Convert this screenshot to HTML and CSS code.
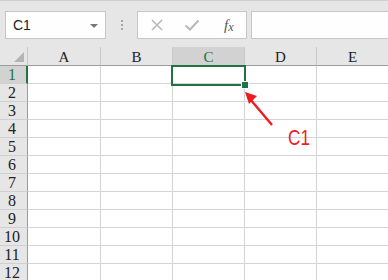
FILE: index.html
```html
<!DOCTYPE html>
<html>
<head>
<meta charset="utf-8">
<link rel="stylesheet" href="styles.css">
</head>
<body>
<div class="app">
  <div class="toolbar">
    <div class="namebox">
      <span class="name">C1</span>
      <span class="caret"></span>
    </div>
    <div class="grip"><i></i><i></i><i></i></div>
    <div class="fbtns">
      <svg class="ico" width="14" height="14" viewBox="0 0 14 14"><path d="M2 2 L12 12 M12 2 L2 12" stroke="#b9b9b9" stroke-width="1.6" fill="none"/></svg>
      <svg class="ico" width="16" height="14" viewBox="0 0 16 14"><path d="M1.5 7.5 L6 11.5 L14.5 2.5" stroke="#b9b9b9" stroke-width="2" fill="none"/></svg>
      <span class="fx"><i>f</i><sub>x</sub></span>
    </div>
    <div class="finput"></div>
  </div>
  <div class="sheet">
    <div class="row head">
      <div class="rh corner"><span class="tri"></span></div>
      <div class="ch first">A</div>
      <div class="ch">B</div>
      <div class="ch sel">C</div>
      <div class="ch">D</div>
      <div class="ch">E</div>
    </div>
    <div class="row"><div class="rh sel">1</div><div class="c first"></div><div class="c"></div><div class="c"></div><div class="c"></div><div class="c"></div></div>
    <div class="row"><div class="rh">2</div><div class="c first"></div><div class="c"></div><div class="c"></div><div class="c"></div><div class="c"></div></div>
    <div class="row"><div class="rh">3</div><div class="c first"></div><div class="c"></div><div class="c"></div><div class="c"></div><div class="c"></div></div>
    <div class="row"><div class="rh">4</div><div class="c first"></div><div class="c"></div><div class="c"></div><div class="c"></div><div class="c"></div></div>
    <div class="row"><div class="rh">5</div><div class="c first"></div><div class="c"></div><div class="c"></div><div class="c"></div><div class="c"></div></div>
    <div class="row"><div class="rh">6</div><div class="c first"></div><div class="c"></div><div class="c"></div><div class="c"></div><div class="c"></div></div>
    <div class="row"><div class="rh">7</div><div class="c first"></div><div class="c"></div><div class="c"></div><div class="c"></div><div class="c"></div></div>
    <div class="row"><div class="rh">8</div><div class="c first"></div><div class="c"></div><div class="c"></div><div class="c"></div><div class="c"></div></div>
    <div class="row"><div class="rh">9</div><div class="c first"></div><div class="c"></div><div class="c"></div><div class="c"></div><div class="c"></div></div>
    <div class="row"><div class="rh">10</div><div class="c first"></div><div class="c"></div><div class="c"></div><div class="c"></div><div class="c"></div></div>
    <div class="row"><div class="rh">11</div><div class="c first"></div><div class="c"></div><div class="c"></div><div class="c"></div><div class="c"></div></div>
    <div class="row"><div class="rh">12</div><div class="c first"></div><div class="c"></div><div class="c"></div><div class="c"></div><div class="c"></div></div>

    <div class="selection"><span class="handle"></span></div>
    <svg class="arrow" width="40" height="44" viewBox="0 0 40 44">
      <path d="M28 38 L6 12" stroke="#ee1c1c" stroke-width="2.4" fill="none"/>
      <path d="M1 5 L13 9 L5 17 Z" fill="#ee1c1c"/>
    </svg>
    <div class="label">C1</div>
  </div>
</div>
</body>
</html>
```
FILE: styles.css
```css
html, body {
  margin: 0;
  padding: 0;
  background: #ffffff;
  overflow: hidden;
}
.app {
  width: 388px;
  height: 280px;
  overflow: hidden;
  font-family: "Liberation Sans", Arial, sans-serif;
}
.toolbar {
  height: 47px;
  background: #e6e6e6;
  border-top: 1px solid #d0d0d0;
  box-sizing: border-box;
  display: flex;
  align-items: flex-start;
  padding-top: 10px;
  padding-left: 5px;
}
.namebox {
  width: 101px;
  height: 28px;
  box-sizing: border-box;
  background: #fefefe;
  border: 1px solid #c6c6c6;
  display: flex;
  align-items: center;
  justify-content: space-between;
  padding: 0 7px 0 7px;
}
.name {
  font-size: 14px;
  color: #222;
  font-family: "Liberation Sans", Arial, sans-serif;
}
.caret {
  width: 0;
  height: 0;
  border-left: 4px solid transparent;
  border-right: 4px solid transparent;
  border-top: 4px solid #777;
  margin-top: 1px;
}
.grip {
  width: 31px;
  height: 28px;
  display: flex;
  flex-direction: column;
  align-items: center;
  justify-content: center;
  gap: 2px;
}
.grip i {
  width: 2px;
  height: 2px;
  background: #a8a8a8;
  display: block;
}
.fbtns {
  width: 110px;
  height: 28px;
  box-sizing: border-box;
  background: #fefefe;
  border: 1px solid #c6c6c6;
  display: flex;
  align-items: center;
  padding-left: 12px;
  gap: 20px;
}
.ico { display: block; }
.fx {
  font-family: "Liberation Serif", serif;
  font-size: 15px;
  color: #555;
  margin-left: 4px;
}
.fx i { font-style: italic; }
.fx sub {
  font-style: italic;
  font-size: 12px;
  vertical-align: baseline;
  position: relative;
  top: 1px;
}
.finput {
  flex: 1;
  height: 28px;
  margin-left: 4px;
  box-sizing: border-box;
  background: #fefefe;
  border: 1px solid #c6c6c6;
  border-right: none;
}
.sheet {
  position: relative;
}
.row {
  display: flex;
  height: 18px;
}
.row.head {
  height: 19px;
}
.rh {
  width: 28px;
  flex: none;
  box-sizing: border-box;
  background: #e6e6e6;
  border-right: 1px solid #9c9c9c;
  border-bottom: 1px solid #d0d0d0;
  font-family: "Liberation Serif", "Times New Roman", serif;
  font-size: 16px;
  color: #222;
  text-align: center;
  line-height: 18px;
  padding-right: 3px;
}
.rh.sel {
  background: #d2d2d2;
  color: #217346;
  border-right: 2px solid #217346;
  padding-right: 2px;
}
.corner {
  position: relative;
  border-bottom: 1px solid #9c9c9c;
  border-right: 1px solid #c8c8c8;
}
.tri {
  position: absolute;
  right: 3px;
  bottom: 3px;
  width: 0;
  height: 0;
  border-left: 10px solid transparent;
  border-bottom: 10px solid #b4b4b4;
}
.ch {
  width: 72px;
  flex: none;
  box-sizing: border-box;
  background: #e6e6e6;
  border-right: 1px solid #c8c8c8;
  border-bottom: 1px solid #9c9c9c;
  font-family: "Liberation Serif", "Times New Roman", serif;
  font-size: 15px;
  color: #222;
  text-align: center;
  line-height: 20px;
}
.ch.first { width: 73px; }
.ch.sel {
  background: #d2d2d2;
  color: #217346;
}
.c {
  width: 72px;
  flex: none;
  box-sizing: border-box;
  border-right: 1px solid #d4d4d4;
  border-bottom: 1px solid #d4d4d4;
}
.c.first { width: 73px; }
.selection {
  position: absolute;
  left: 171px;
  top: 18px;
  width: 75px;
  height: 21px;
  box-sizing: border-box;
  border: 2px solid #217346;
}
.handle {
  position: absolute;
  right: -5px;
  bottom: -5px;
  width: 6px;
  height: 6px;
  background: #217346;
  border: 1px solid #fff;
}
.arrow {
  position: absolute;
  left: 244px;
  top: 40px;
}
.label {
  position: absolute;
  left: 288px;
  top: 78px;
  font-family: "Liberation Sans", Arial, sans-serif;
  font-size: 22px;
  color: #ee1c1c;
  transform: scaleX(0.78);
  transform-origin: left top;
}
```
